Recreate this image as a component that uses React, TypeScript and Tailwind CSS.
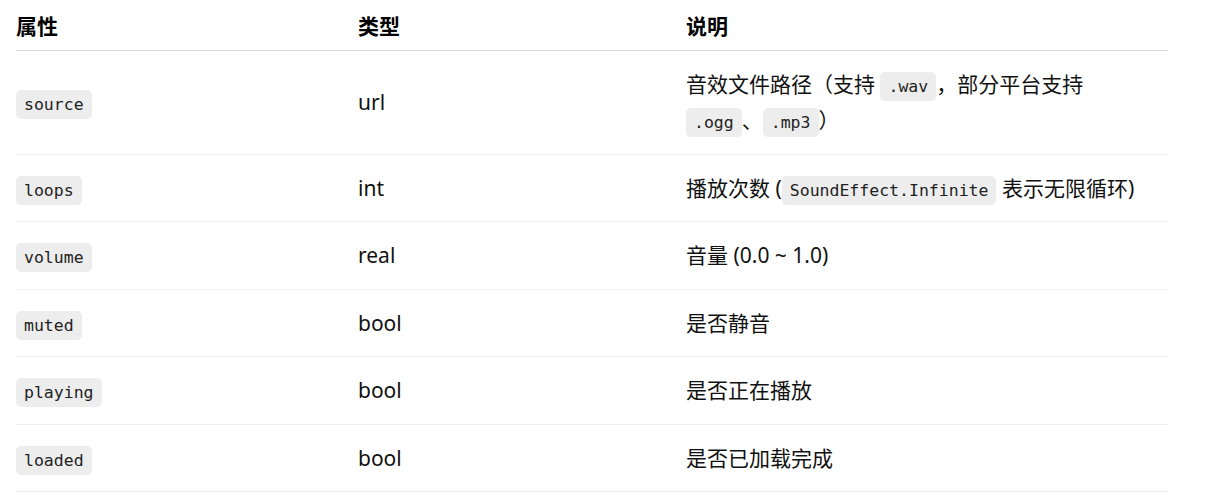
import type { JSX } from "react/jsx-runtime";
import type { ReactNode } from "react";

function Code({ children }: { children: ReactNode }): JSX.Element {
  return (
    <code className="rounded-[5px] bg-[#ededed] px-2 py-[5px] font-['DejaVu_Sans_Mono',monospace] text-[16.5px] leading-none text-[#222]">
      {children}
    </code>
  );
}

const rows: { name: string; type: string; desc: ReactNode }[] = [
  {
    name: "source",
    type: "url",
    desc: (
      <>
        音效文件路径（支持 <Code>.wav</Code>，部分平台支持
        <br />
        <Code>.ogg</Code>、<Code>.mp3</Code>）
      </>
    ),
  },
  {
    name: "loops",
    type: "int",
    desc: (
      <>
        播放次数 (<Code>SoundEffect.Infinite</Code> 表示无限循环)
      </>
    ),
  },
  { name: "volume", type: "real", desc: "音量 (0.0 ~ 1.0)" },
  { name: "muted", type: "bool", desc: "是否静音" },
  { name: "playing", type: "bool", desc: "是否正在播放" },
  { name: "loaded", type: "bool", desc: "是否已加载完成" },
];

export default function App(): JSX.Element {
  return (
    <div className="min-h-screen bg-white pl-4 font-['Noto_Sans','Noto_Sans_CJK_SC',sans-serif] text-[21px] text-[#111]">
      <table className="w-[1152px] table-fixed text-left">
        <colgroup>
          <col className="w-[342px]" />
          <col className="w-[328px]" />
          <col className="w-[482px]" />
        </colgroup>
        <thead>
          <tr className="border-b border-[#d9d9d9]">
            {["属性", "类型", "说明"].map((h) => (
              <th key={h} className="h-[50px] pt-[7px] pb-[5px] font-bold leading-[36px] text-black">
                {h}
              </th>
            ))}
          </tr>
        </thead>
        <tbody>
          {rows.map((r) => (
            <tr key={r.name} className="border-b border-[#eeeeee]">
              <td className="h-[67.5px] py-[15px] align-middle leading-[36.5px]">
                <Code>{r.name}</Code>
              </td>
              <td className="py-[15px] align-middle leading-[36.5px]">{r.type}</td>
              <td className="py-[15px] pr-6 align-middle leading-[36.5px]">{r.desc}</td>
            </tr>
          ))}
        </tbody>
      </table>
    </div>
  );
}
